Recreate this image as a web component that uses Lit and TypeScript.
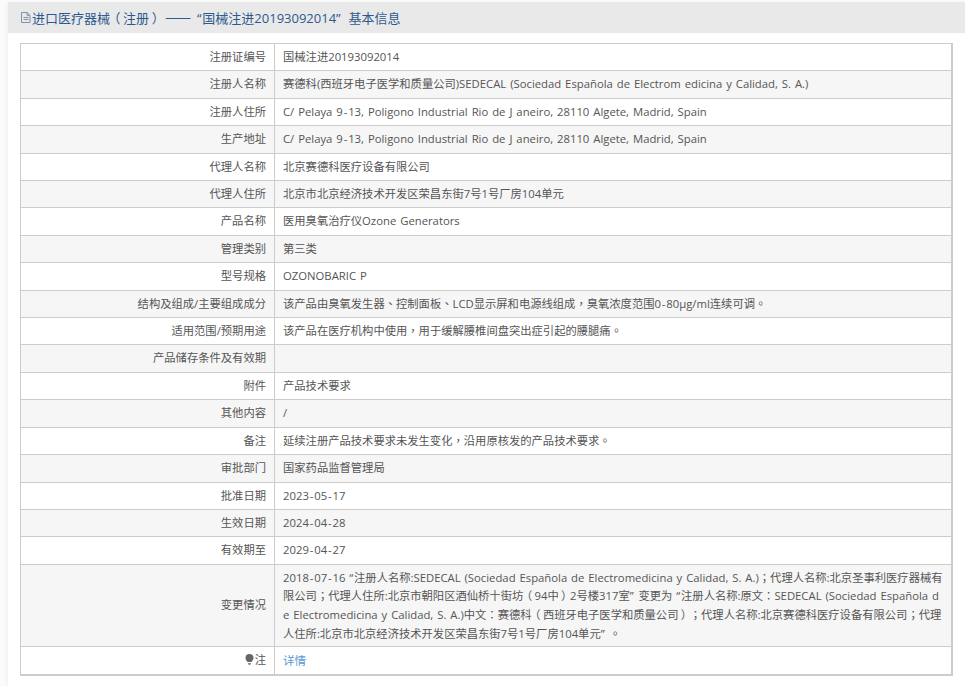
import { LitElement, html, css } from "lit";
import { customElement } from "lit/decorators.js";

const rows: [string, string][] = [
  ["注册证编号", "国械注进20193092014"],
  ["注册人名称", "赛德科(西班牙电子医学和质量公司)SEDECAL (Sociedad Española de Electrom edicina y Calidad, S. A.)"],
  ["注册人住所", "C/ Pelaya 9-13, Poligono Industrial Rio de J aneiro, 28110 Algete, Madrid, Spain"],
  ["生产地址", "C/ Pelaya 9-13, Poligono Industrial Rio de J aneiro, 28110 Algete, Madrid, Spain"],
  ["代理人名称", "北京赛德科医疗设备有限公司"],
  ["代理人住所", "北京市北京经济技术开发区荣昌东街7号1号厂房104单元"],
  ["产品名称", "医用臭氧治疗仪Ozone Generators"],
  ["管理类别", "第三类"],
  ["型号规格", "OZONOBARIC P"],
  ["结构及组成/主要组成成分", "该产品由臭氧发生器、控制面板、LCD显示屏和电源线组成，臭氧浓度范围0-80μg/ml连续可调。"],
  ["适用范围/预期用途", "该产品在医疗机构中使用，用于缓解腰椎间盘突出症引起的腰腿痛。"],
  ["产品储存条件及有效期", ""],
  ["附件", "产品技术要求"],
  ["其他内容", "/"],
  ["备注", "延续注册产品技术要求未发生变化，沿用原核发的产品技术要求。"],
  ["审批部门", "国家药品监督管理局"],
  ["批准日期", "2023-05-17"],
  ["生效日期", "2024-04-28"],
  ["有效期至", "2029-04-27"],
];

const changeLines = [
  "2018-07-16 “注册人名称:SEDECAL (Sociedad Española de Electromedicina y Calidad, S. A.)；代理人名称:北京圣事利医疗器械有",
  "限公司；代理人住所:北京市朝阳区酒仙桥十街坊（94中）2号楼317室” 变更为 “注册人名称:原文：SEDECAL (Sociedad Española d",
  "e Electromedicina y Calidad, S. A.)中文：赛德科（西班牙电子医学和质量公司）；代理人名称:北京赛德科医疗设备有限公司；代理",
  "人住所:北京市北京经济技术开发区荣昌东街7号1号厂房104单元” 。",
];

const classFor = (c: string): string => {
  if (c === "（") return "pl";
  if (c === "）") return "pr";
  if (c === "-") return "hy";
  if (c === "“" || c === "”") return "q";
  return "ct";
};

const fmt = (s: string) =>
  s.split(/([（）；，：、。“”-])/).map((part) =>
    part.length === 1 && /[（）；，：、。“”-]/.test(part)
      ? html`<span class=${classFor(part)}>${part}</span>`
      : part
  );

@customElement("app-root")
export class AppRoot extends LitElement {
  static styles = css`
    :host {
      display: block;
      height: 686px;
      overflow: hidden;
      background: #fbfbfb;
      font-family: "Open Sans", "Noto Sans CJK SC", sans-serif;
      font-size: 11.3px;
      word-spacing: 1px;
      color: #555;
    }
    .card {
      margin: 2px 0 0 8px;
      background: #fff;
      height: 684px;
      box-shadow: -2px 0 4px rgba(0, 0, 0, 0.04);
    }
    .head {
      height: 31px;
      background: #e9e9e9;
      display: flex;
      align-items: center;
      padding-left: 12px;
      font-size: 13px;
      word-spacing: 1.6px;
      color: #2d5a8e;
    }
    .head svg { flex: none; }
    .dash {
      font-family: "Noto Sans CJK SC", sans-serif;
      font-size: 15.5px;
      line-height: 0;
      margin: 0 1px 0 -2px;
    }
    .tail { margin-left: 2px; }
    .body { padding: 10px 12px 0; }
    table {
      width: 933px;
      border-collapse: collapse;
      table-layout: fixed;
      border: 1px solid #ccc;
      border-bottom-width: 2px;
      border-right-width: 2px;
    }
    th, td {
      border: 1px solid #ccc;
      font-weight: 400;
      line-height: 18.4px;
      padding: 4px 8px;
      height: 18.4px;
    }
    th { width: 237px; text-align: right; }
    tr:nth-child(even) { background: #f6f6f6; }
    .change td { line-height: 18.7px; padding-bottom: 2px; white-space: nowrap; }
    .note th, .note td { border-bottom: 0; height: 19.4px; }
    .note td { padding-top: 5px; padding-bottom: 3px; }
    .note th svg { vertical-align: -1px; margin-right: 1px; }
    .note a { color: #5b9bd5; text-decoration: none; font-size: 11.6px; }
    .ct { font-family: "Noto Sans CJK TC", sans-serif; line-height: 0; }
    .pl, .pr { display: inline-block; width: 1em; line-height: 0; }
    .pl { transform: translateX(-0.2em); }
    .pr { transform: translateX(0.2em); }
    .hy { padding: 0 0.85px; }
    .q { letter-spacing: 0.8px; }
  `;

  render() {
    return html`
      <div class="card">
        <div class="head">
          <svg width="12" height="13" viewBox="0 0 12 13" fill="none" stroke="#7e93ad" stroke-width="1">
            <path d="M1.500 1.500h5.500l3 2.800v7.200h-8.500z M7 1.500v2.800h3 M3.500 6.500h5 M3.500 8.500h5" />
          </svg>
          <span>${fmt("进口医疗器械（注册）")} <span class="dash">——</span> ${fmt("“国械注进20193092014”")} <span class="tail">基本信息</span></span>
        </div>
        <div class="body">
          <table>
            <tbody>
              ${rows.map(([k, v]) => html`<tr><th>${k}</th><td>${fmt(v)}</td></tr>`)}
              <tr class="change">
                <th>变更情况</th>
                <td>${changeLines.map((l, i) => html`${i ? html`<br />` : ""}${fmt(l)}`)}</td>
              </tr>
              <tr class="note">
                <th>
                  <svg width="9" height="11" viewBox="0 0 9 11" fill="#666">
                    <path d="M4.500 0a4 4 0 0 1 4 4c0 1.800-1.300 2.600-2 4h-4c-.7-1.400-2-2.200-2-4a4 4 0 0 1 4-4z M3 9h3v.8H3z M3.500 10.200h2v.8h-2z" />
                  </svg>注
                </th>
                <td><a href="#">详情</a></td>
              </tr>
            </tbody>
          </table>
        </div>
      </div>
    `;
  }
}
